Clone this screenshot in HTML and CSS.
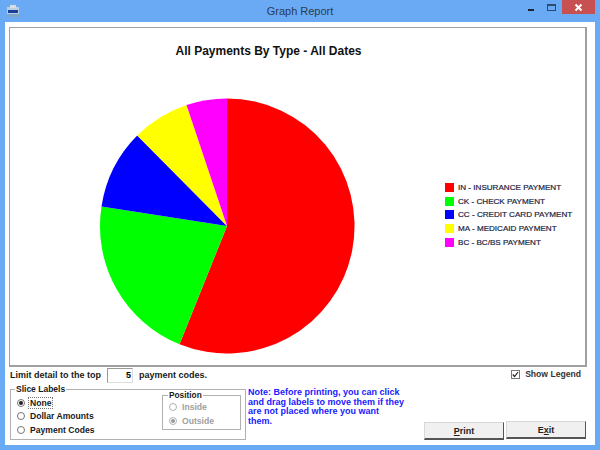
FILE: index.html
```html
<!DOCTYPE html>
<html lang="en">
<head>
    <meta charset="UTF-8">
    <title>Graph Report</title>
    <link rel="stylesheet" href="styles.css">
</head>
<body>
    <div class="window">
        <div class="titlebar">
            <svg class="app-icon" width="12" height="13" viewBox="0 0 12 13">
                <rect x="0" y="2" width="12" height="10" fill="#b9cfe0"/>
                <rect x="3" y="0" width="6" height="3" fill="#d8dee4"/>
                <rect x="1" y="5" width="10" height="3" fill="#1c3f9c"/>
                <rect x="0" y="9" width="12" height="3" fill="#7fa6c4"/>
            </svg>
            <span class="title">Graph Report</span>
            <div class="caption-btns">
                <span class="btn-min"></span>
                <span class="btn-max"></span>
                <span class="btn-close">
                    <svg width="9" height="9" viewBox="0 0 9 9">
                        <path d="M1.5 1.5L7.5 7.5M7.5 1.5L1.5 7.5" stroke="#fff" stroke-width="2"/>
                    </svg>
                </span>
            </div>
        </div>

        <div class="client">
            <div class="chart-frame">
                <h1>All Payments By Type - All Dates</h1>
                <div class="chart-body">
                    <svg class="pie" width="256" height="256" viewBox="0 0 256 256">
                        <path d="M128 128L128 .5A127.5 127.5 0 1 1 80.5 246.3Z" fill="#ff0000"/>
                        <path d="M128 128L80.5 246.3A127.5 127.5 0 0 1 2.5 108.5Z" fill="#00ff00"/>
                        <path d="M128 128L2.5 108.5A127.5 127.5 0 0 1 38.2 37.6Z" fill="#0000ff"/>
                        <path d="M128 128L38.2 37.6A127.5 127.5 0 0 1 87.5 7Z" fill="#ffff00"/>
                        <path d="M128 128L87.5 7A127.5 127.5 0 0 1 128 .5Z" fill="#ff00ff"/>
                    </svg>
                    <ul class="legend">
                        <li><span class="swatch red"></span>IN - INSURANCE PAYMENT</li>
                        <li><span class="swatch green"></span>CK - CHECK PAYMENT</li>
                        <li><span class="swatch blue"></span>CC - CREDIT CARD PAYMENT</li>
                        <li><span class="swatch yellow"></span>MA - MEDICAID PAYMENT</li>
                        <li><span class="swatch magenta"></span>BC - BC/BS PAYMENT</li>
                    </ul>
                </div>
            </div>

            <div class="controls">
                <div class="controls-left">
                    <div class="limit-row">
                        <span>Limit detail to the top</span>
                        <input class="limit-input" type="text" value="5">
                        <span>payment codes.</span>
                    </div>
                    <fieldset class="group slice-group">
                        <legend>Slice Labels</legend>
                        <div class="radio-list">
                            <label class="radio"><span class="dot checked"></span><span class="focused">None</span></label>
                            <label class="radio"><span class="dot"></span>Dollar Amounts</label>
                            <label class="radio"><span class="dot"></span>Payment Codes</label>
                        </div>
                        <fieldset class="group position-group">
                            <legend>Position</legend>
                            <label class="radio disabled"><span class="dot"></span>Inside</label>
                            <label class="radio disabled"><span class="dot checked"></span>Outside</label>
                        </fieldset>
                    </fieldset>
                </div>
                <p class="note">Note: Before printing, you can click and drag labels to move them if they are not placed where you want them.</p>
                <div class="controls-right">
                    <label class="show-legend">
                        <span class="checkbox">
                            <svg width="7" height="7" viewBox="0 0 7 7">
                                <path d="M.8 3.5L2.6 5.6L6 1" fill="none" stroke="#222" stroke-width="1.2"/>
                            </svg>
                        </span>
                        Show Legend
                    </label>
                    <div class="buttons">
                        <button class="btn"><u>P</u>rint</button>
                        <button class="btn btn-exit">E<u>x</u>it</button>
                    </div>
                </div>
            </div>
        </div>
    </div>
</body>
</html>
```

FILE: styles.css
```css
html, body {
    margin: 0;
    padding: 0;
}

body {
    width: 600px;
    height: 450px;
    overflow: hidden;
    background: #6aaaf5;
    font-family: "Liberation Sans", Arial, sans-serif;
    font-size: 9px;
    font-weight: bold;
    color: #1a1a1a;
}

.window {
    display: flex;
    flex-direction: column;
    height: 450px;
}

.titlebar {
    display: grid;
    grid-template-columns: 1fr auto 1fr;
    align-items: center;
    height: 22px;
    padding-left: 7px;
    flex: none;
}

.app-icon {
    flex: none;
}

.title {
    padding-right: 7px;
    font-size: 11px;
    font-weight: normal;
    color: #2a3a4d;
}

.caption-btns {
    display: flex;
    align-items: flex-start;
    align-self: flex-start;
    justify-content: flex-end;
    margin-right: 5px;
}

.btn-min {
    width: 6px;
    height: 2px;
    margin: 9px 13px 0 0;
    background: #1a2533;
}

.btn-max {
    width: 7px;
    height: 4px;
    margin: 4px 6px 0 0;
    border: 1px solid #2d4a70;
    border-top-width: 2px;
}

.btn-close {
    display: flex;
    align-items: center;
    justify-content: center;
    width: 33px;
    height: 14px;
    background: #c75050;
}

.client {
    flex: 1;
    display: flex;
    flex-direction: column;
    margin: 0 5px 5px 5px;
    padding: 5px 8px 0 4px;
    background: #fff;
    min-height: 0;
}

.chart-frame {
    height: 337px;
    flex: none;
    border: 1px solid #a0a0a0;
    border-bottom-width: 2px;
    border-right-width: 2px;
    box-sizing: content-box;
}

h1 {
    margin: 16px 0 0 0;
    padding-right: 58px;
    text-align: center;
    font-size: 12px;
    line-height: 14px;
    color: #111;
}

.chart-body {
    display: flex;
    align-items: flex-start;
}

.pie {
    flex: none;
    margin: 40px 0 0 89px;
}

.legend {
    list-style: none;
    margin: 123px 0 0 90px;
    padding: 0;
    font-size: 8.1px;
    font-weight: normal;
    color: #1a2240;
    -webkit-text-stroke: 0.2px #1a2240;
}

.legend li {
    display: flex;
    align-items: center;
    height: 13.6px;
    white-space: nowrap;
}

.swatch {
    width: 9px;
    height: 9px;
    margin-right: 4px;
    flex: none;
}

.red { background: #ff0000; }
.green { background: #00ff00; }
.blue { background: #0000ff; }
.yellow { background: #ffff00; }
.magenta { background: #ff00ff; }

.controls {
    flex: 1;
    display: flex;
    min-height: 0;
}

.controls-left {
    width: 236px;
    flex: none;
    margin-left: 1px;
}

.limit-row {
    display: flex;
    align-items: center;
    gap: 6px;
    height: 16px;
    white-space: nowrap;
}

.limit-input {
    width: 26px;
    height: 15px;
    box-sizing: border-box;
    padding: 0 1px;
    border: 1px solid #999;
    border-right-color: #ddd;
    border-bottom-color: #ddd;
    text-align: right;
    font: inherit;
}

.group {
    margin: 0;
    padding: 0;
    border: 1px solid #b0b0b0;
}

.group legend {
    margin-left: 4px;
    padding: 0 1px;
    font-size: 8.5px;
    line-height: 10px;
}

.slice-group {
    display: flex;
    justify-content: space-between;
    margin-top: 1px;
    height: 56px;
    box-sizing: border-box;
}

.radio-list {
    padding: 2px 0 0 6px;
}

.radio {
    display: flex;
    align-items: center;
    height: 13.5px;
    font-size: 8.6px;
    white-space: nowrap;
}

.dot {
    position: relative;
    width: 8px;
    height: 8px;
    margin-right: 5px;
    flex: none;
    box-sizing: border-box;
    border: 1px solid #777;
    border-radius: 50%;
    background: #fff;
}

.dot.checked::after {
    content: "";
    position: absolute;
    top: 1px;
    left: 1px;
    width: 4px;
    height: 4px;
    border-radius: 50%;
    background: #222;
}

.focused {
    outline: 1px dotted #777;
    outline-offset: 0;
    padding: 0 1px;
    margin-left: -1px;
}

.position-group {
    width: 79px;
    height: 40px;
    box-sizing: border-box;
    margin: -4px 4px 0 0;
    padding-left: 6px;
}

.position-group legend {
    margin-left: -1px;
    font-size: 8.3px;
}

.radio.disabled {
    height: 14px;
    color: #a0a0a0;
}

.disabled .dot {
    border-color: #b0b0b0;
}

.disabled .dot.checked::after {
    background: #999;
}

.note {
    width: 157px;
    flex: none;
    margin: 21px 0 0 2px;
    color: #2020ff;
    line-height: 9.7px;
}

.controls-right {
    flex: 1;
    display: flex;
    flex-direction: column;
    align-items: flex-end;
    justify-content: space-between;
    padding-bottom: 5px;
}

.show-legend {
    display: flex;
    align-items: center;
    margin: 2px 6px 0 0;
    white-space: nowrap;
    font-size: 8.6px;
    color: #333;
}

.checkbox {
    display: flex;
    box-sizing: border-box;
    width: 9px;
    height: 9px;
    margin-right: 5px;
    border: 1px solid #777;
}

.buttons {
    display: flex;
    align-items: flex-end;
    gap: 2px;
    margin-right: 1px;
}

.btn {
    width: 80px;
    height: 18px;
    padding: 0;
    background: #f0f0f0;
    border: 1px solid #d8d8d8;
    border-right-color: #555;
    border-bottom: 2px solid #555;
    font: inherit;
    color: #222;
}

.btn-exit {
    margin-bottom: 1px;
}
```
